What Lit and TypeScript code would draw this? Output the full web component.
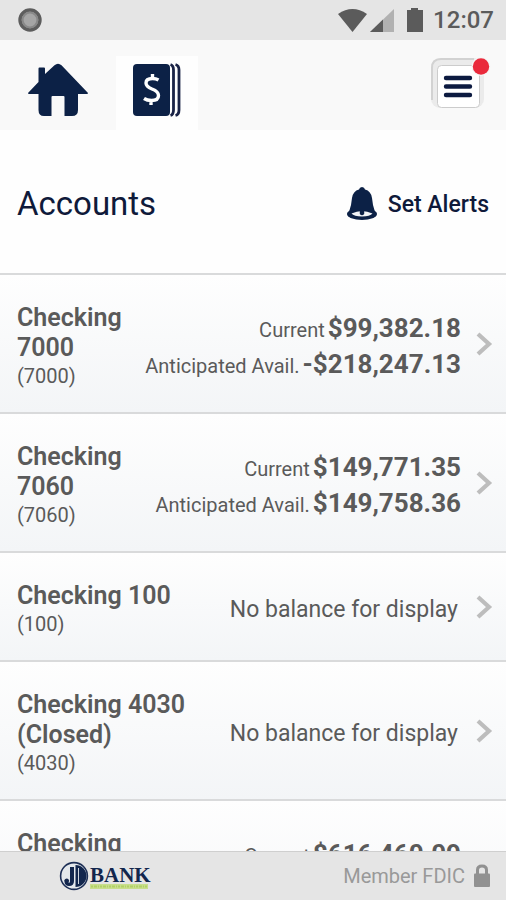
import { LitElement, html, css, svg, nothing } from "lit";
import { customElement, property } from "lit/decorators.js";

interface Balance {
  label: string;
  amount: string;
}

interface Account {
  name: string;
  number: string;
  balances: Balance[];
}

const ACCOUNTS: Account[] = [
  {
    name: "Checking 7000",
    number: "(7000)",
    balances: [
      { label: "Current", amount: "$99,382.18" },
      { label: "Anticipated Avail.", amount: "-$218,247.13" },
    ],
  },
  {
    name: "Checking 7060",
    number: "(7060)",
    balances: [
      { label: "Current", amount: "$149,771.35" },
      { label: "Anticipated Avail.", amount: "$149,758.36" },
    ],
  },
  { name: "Checking 100", number: "(100)", balances: [] },
  { name: "Checking 4030 (Closed)", number: "(4030)", balances: [] },
  {
    name: "Checking 8010",
    number: "(8010)",
    balances: [
      { label: "Current", amount: "$616,460.09" },
      { label: "Anticipated Avail.", amount: "$616,460.09" },
    ],
  },
];

const chevron = html`<svg class="chevron" width="18" height="26" viewBox="0 0 18 26" aria-hidden="true">
  <path d="M3 3 L14 13 L3 23" fill="none" stroke="#bdbdbd" stroke-width="4.2" />
</svg>`;

@customElement("account-row")
export class AccountRow extends LitElement {
  @property({ attribute: false }) account!: Account;

  static styles = css`
    :host {
      display: block;
    }
    .row {
      display: flex;
      align-items: center;
      padding: 28px 13px 22px 17px;
      border-top: 2px solid #d9dadb;
      background: linear-gradient(#fefefe, #f3f5f7);
      color: #5a5a5a;
      text-decoration: none;
    }
    .title {
      flex: 1;
      min-width: 0;
    }
    .name {
      font-size: 25px;
      line-height: 30px;
      font-weight: 600;
    }
    .number {
      font-size: 20px;
      line-height: 27px;
    }
    .balances {
      white-space: nowrap;
    }
    .balance {
      display: flex;
      align-items: baseline;
      justify-content: flex-end;
      gap: 3px;
      font-size: 20px;
      line-height: 34px;
    }
    .amount {
      font-size: 26px;
      font-weight: 700;
    }
    .none {
      font-size: 23px;
      padding-right: 3px;
    }
    .chevron {
      flex: none;
      margin: 0 0 6px 14px;
    }
  `;

  render() {
    const { name, number, balances } = this.account;
    return html`<a class="row" href="#">
      <div class="title">
        <div class="name">${name}</div>
        <div class="number">${number}</div>
      </div>
      <div class="balances">
        ${balances.map(
          (b) => html`<div class="balance"><span>${b.label}</span><span class="amount">${b.amount}</span></div>`
        )}
        ${balances.length ? nothing : html`<div class="none">No balance for display</div>`}
      </div>
      ${chevron}
    </a>`;
  }
}

@customElement("app-root")
export class AppRoot extends LitElement {
  static styles = css`
    :host {
      display: flex;
      flex-direction: column;
      height: 100vh;
      overflow: hidden;
      background: #fefefe;
      font-family: Roboto, "Liberation Sans", sans-serif;
      color: #0f1a3a;
    }
    .status {
      flex: none;
      display: flex;
      align-items: center;
      justify-content: space-between;
      height: 40px;
      padding: 0 12px 0 17px;
      background: #e5e5e5;
      color: #5b5b5b;
    }
    .signals {
      display: flex;
      align-items: center;
    }
    .clock {
      margin-left: 8px;
      font-size: 24px;
      line-height: 40px;
      font-weight: 500;
    }
    .nav {
      flex: none;
      display: flex;
      align-items: flex-end;
      height: 90px;
      background: #f9f9f9;
    }
    .tab {
      display: flex;
      align-items: center;
      justify-content: center;
      box-sizing: border-box;
      height: 74px;
      padding-bottom: 6px;
      text-decoration: none;
    }
    .home {
      width: 116px;
    }
    .current {
      width: 82px;
      background: #fefefe;
    }
    .menu {
      margin: 0 14px 20px auto;
      padding: 0;
      border: 0;
      background: none;
      display: block;
      line-height: 0;
    }
    .heading {
      flex: none;
      display: flex;
      align-items: center;
      justify-content: space-between;
      padding: 50px 17px 45px;
    }
    .page-title {
      margin: 0;
      font-size: 33px;
      line-height: 48px;
      font-weight: 400;
    }
    .alerts {
      display: flex;
      align-items: center;
      gap: 10px;
      font-size: 23px;
      font-weight: 500;
      color: inherit;
      text-decoration: none;
    }
    .list {
      flex: 1;
      min-height: 0;
      overflow: hidden;
    }
    .footer {
      flex: none;
      display: flex;
      align-items: center;
      justify-content: space-between;
      height: 48px;
      padding: 0 15px 0 58px;
      border-top: 1px solid #cfcfcf;
      background: #e5e5e5;
      color: #999999;
      font-size: 20px;
    }
    .member {
      display: flex;
      align-items: center;
      gap: 8px;
    }
    .mark {
      font-family: "Liberation Serif", serif;
      font-weight: 700;
    }
  `;

  private logo() {
    return svg`<svg width="94" height="32" viewBox="0 0 94 32" role="img" aria-label="JD Bank">
      <circle cx="16" cy="16" r="13.4" fill="#e4e8ec" stroke="#1d2f56" stroke-width="1.6" />
      <path d="M17.5 5 A11 11 0 0 1 17.5 27 Z" fill="#12264d" />
      <path d="M20.5 8 V24" stroke="#cfd5dd" stroke-width="1" />
      <path d="M12 7 H16 V21 Q16 26 11 26 Q7 26 6.5 22 A2.4 2.4 0 1 1 10.5 22.5 Q12 23.5 12 21 Z" fill="#12264d" />
      <text class="mark" x="32" y="22" font-size="21" fill="#12264d">BANK</text>
      <rect x="32" y="24" width="58" height="5" fill="#c9de8c" />
      <path d="M33 26.5 H89" stroke="#b2d166" stroke-width="2" stroke-dasharray="2 1 3 1 1 1" />
    </svg>`;
  }

  render() {
    return html`
      <div class="status">
        <svg width="26" height="26" viewBox="0 0 26 26" aria-hidden="true">
          <circle cx="13" cy="13" r="10" fill="#a5a5a5" stroke="#5d5d5d" stroke-width="3.4" />
          <circle cx="13" cy="13" r="7.4" fill="none" stroke="#888888" stroke-width="2" />
        </svg>
        <div class="signals">
          <svg width="88" height="26" viewBox="0 0 88 26" aria-hidden="true">
            <path d="M1 7 Q15.5 -3 30 7 L15.5 25 Z" fill="#5b5b5b" />
            <path d="M57 2 V25 H33 Z" fill="#b1b1b1" />
            <path d="M46 12.5 V25 H33 Z" fill="#5b5b5b" />
            <path d="M74 1 H81 V3 H86 V25 H70 V3 H74 Z" fill="#5b5b5b" />
          </svg>
          <span class="clock">12:07</span>
        </div>
      </div>
      <nav class="nav">
        <a class="tab home" href="#" aria-label="Home">
          <svg width="60" height="54" viewBox="0 0 60 54">
            <path
              d="M10.5 5.5 Q10.5 4.5 11.5 4.5 H16 Q17 4.5 17 5.5 V11 L26.5 2.3 Q30 -1 33.5 2.3 L60 30 Q60 31 59 31 H50 V47 Q50 53 44 53 H36.5 V34 Q36.5 33 35.5 33 H24.5 Q23.5 33 23.5 34 V53 H16 Q10.5 53 10.5 47 V31 H1 Q0 31 0 30 L10.5 19 Z"
              fill="#0c2146"
            />
          </svg>
        </a>
        <a class="tab current" href="#" aria-label="Accounts" aria-current="page">
          <svg width="50" height="54" viewBox="0 0 50 54">
            <rect x="1" y="1" width="37" height="52" rx="4" fill="#0c2146" />
            <path
              d="M38.5 1.5 Q41.5 2.5 41.5 7 V47 Q41.5 51.5 38.5 52.5 M43.5 1.5 Q47 2.5 47 7 V47 Q47 51.5 43.5 52.5"
              fill="none" stroke="#1a2346" stroke-width="2.8"
            />
            <path
              d="M26.5 17 Q24 15.5 20.5 15.5 Q14 15.5 14 20 Q14 23.5 20 26 Q26.5 28.5 26.5 32.5 Q26.5 37.5 19.5 37.5 Q15 37.5 12 35.5 M20.5 11 V15.5 M19 37 V42"
              fill="none" stroke="#ffffff" stroke-width="3.4"
            />
          </svg>
        </a>
        <button class="menu" aria-label="Menu, new notification">
          <svg width="66" height="56" viewBox="0 0 66 56">
            <rect x="5" y="4" width="53" height="50" rx="9" fill="#ebebeb" />
            <path d="M6 46 V14 Q6 5 15 5 H48" fill="none" stroke="#d2d2d2" stroke-width="2" />
            <rect x="11.5" y="11.5" width="42" height="42" rx="4" fill="#ffffff" stroke="#cccccc" />
            <path d="M20 24 H44 M20 32.5 H44 M20 41 H44" stroke="#0c1a40" stroke-width="4.4" stroke-linecap="round" />
            <circle cx="55" cy="12.5" r="9.5" fill="#f6f6f6" />
            <circle cx="55" cy="12.5" r="8.2" fill="#ea2a3c" />
          </svg>
        </button>
      </nav>
      <header class="heading">
        <h1 class="page-title">Accounts</h1>
        <a class="alerts" href="#">
          <svg width="32" height="34" viewBox="0 0 32 34" aria-hidden="true">
            <ellipse cx="16" cy="27" rx="15" ry="6" fill="#0c2146" />
            <path
              d="M16 0 Q18.5 0 19 2.5 Q25 4 26 11 Q26.5 18 29 25 H3 Q5.5 18 6 11 Q7 4 13 2.5 Q13.5 0 16 0 Z"
              fill="#0c2146"
            />
            <path d="M5.5 26.5 Q16 21.5 26.5 26.5 Q24 29.5 16 29.5 Q8 29.5 5.5 26.5 Z" fill="#f2f4f7" />
            <path d="M13.8 23 H18.2 V27 Q16 29.5 13.8 27 Z" fill="#0c2146" />
          </svg>
          <span>Set Alerts</span>
        </a>
      </header>
      <main class="list">
        ${ACCOUNTS.map((a) => html`<account-row .account=${a}></account-row>`)}
      </main>
      <footer class="footer">
        ${this.logo()}
        <div class="member">
          <span>Member FDIC</span>
          <svg width="18" height="24" viewBox="0 0 18 24" aria-hidden="true">
            <path d="M4.5 11 V6 Q4.5 2 9 2 Q13.5 2 13.5 6 V11" fill="none" stroke="#919191" stroke-width="3" />
            <rect x="1" y="9.5" width="16" height="13.5" rx="1" fill="#919191" />
          </svg>
        </div>
      </footer>
    `;
  }
}
